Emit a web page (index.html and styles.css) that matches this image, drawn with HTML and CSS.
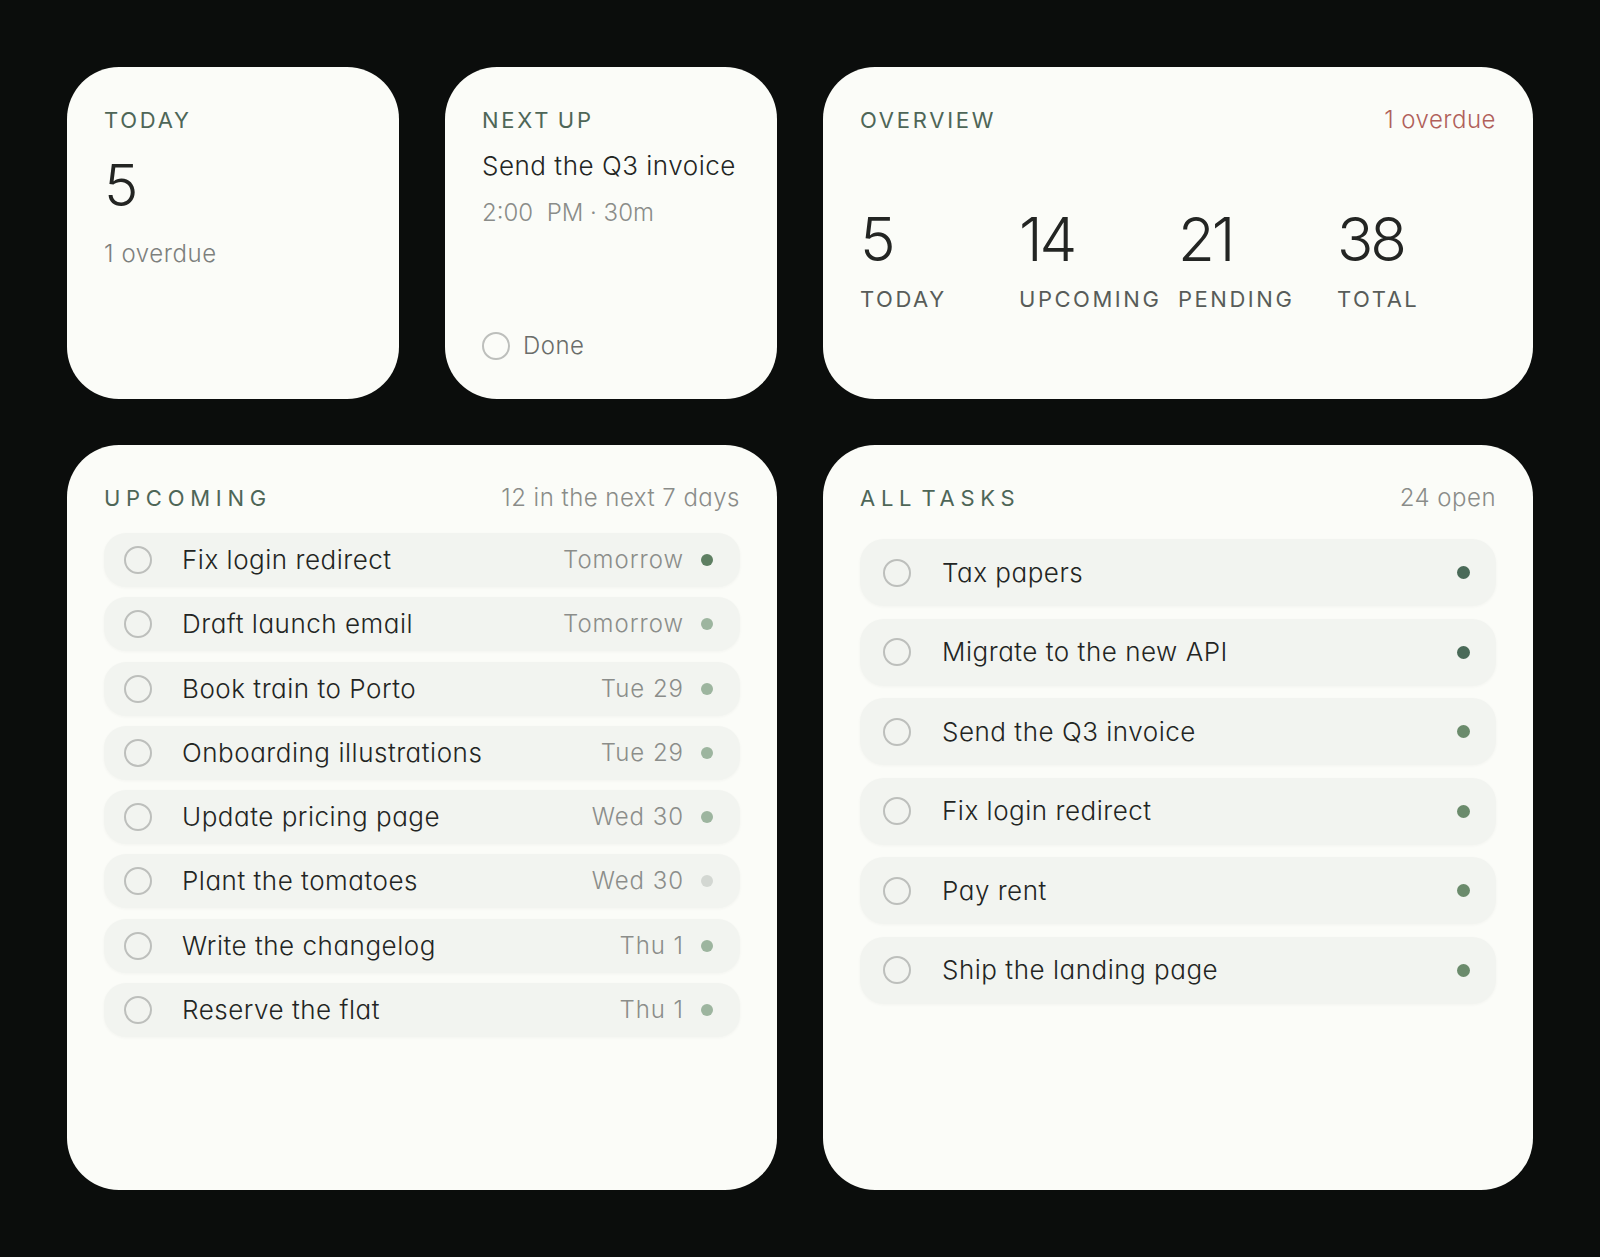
FILE: index.html
```html
<!DOCTYPE html>
<html lang="en">
<head>
<meta charset="utf-8">
<title>Tasks</title>
<link rel="stylesheet" href="styles.css">
</head>
<body>
<main class="board">
  <section class="card card-today">
    <div class="label">TODAY</div>
    <div class="big">5</div>
    <div class="sub">1 overdue</div>
  </section>

  <section class="card card-next">
    <div class="label">NEXT UP</div>
    <div class="next-title">Send the Q3 invoice</div>
    <div class="next-time">2:00&nbsp; PM · 30m</div>
    <div class="done"><span class="check"></span><span class="done-text">Done</span></div>
  </section>

  <section class="card card-overview">
    <div class="card-head">
      <div class="label">OVERVIEW</div>
      <div class="overdue">1 overdue</div>
    </div>
    <div class="stats">
      <div class="stat"><div class="big">5</div><div class="stat-label">TODAY</div></div>
      <div class="stat"><div class="big">14</div><div class="stat-label">UPCOMING</div></div>
      <div class="stat"><div class="big">21</div><div class="stat-label">PENDING</div></div>
      <div class="stat"><div class="big">38</div><div class="stat-label">TOTAL</div></div>
    </div>
  </section>

  <section class="card card-list card-upcoming">
    <div class="card-head">
      <div class="label section">UPCOMING</div>
      <div class="meta">12 in the next 7 days</div>
    </div>
    <ul class="rows rows-upcoming">
      <li class="row"><span class="check"></span><span class="row-text">Fix login redirect</span><span class="date">Tomorrow</span><span class="dot dot-strong"></span></li>
      <li class="row"><span class="check"></span><span class="row-text">Draft launch email</span><span class="date">Tomorrow</span><span class="dot dot-soft"></span></li>
      <li class="row"><span class="check"></span><span class="row-text">Book train to Porto</span><span class="date">Tue 29</span><span class="dot dot-soft"></span></li>
      <li class="row"><span class="check"></span><span class="row-text">Onboarding illustrations</span><span class="date">Tue 29</span><span class="dot dot-soft"></span></li>
      <li class="row"><span class="check"></span><span class="row-text">Update pricing page</span><span class="date">Wed 30</span><span class="dot dot-soft"></span></li>
      <li class="row"><span class="check"></span><span class="row-text">Plant the tomatoes</span><span class="date">Wed 30</span><span class="dot dot-grey"></span></li>
      <li class="row"><span class="check"></span><span class="row-text">Write the changelog</span><span class="date">Thu 1</span><span class="dot dot-soft"></span></li>
      <li class="row"><span class="check"></span><span class="row-text">Reserve the flat</span><span class="date">Thu 1</span><span class="dot dot-soft"></span></li>
    </ul>
  </section>

  <section class="card card-list card-all">
    <div class="card-head">
      <div class="label section">ALL TASKS</div>
      <div class="meta">24 open</div>
    </div>
    <ul class="rows rows-all">
      <li class="row"><span class="check"></span><span class="row-text">Tax papers</span><span class="dot dot-dark"></span></li>
      <li class="row"><span class="check"></span><span class="row-text">Migrate to the new API</span><span class="dot dot-dark"></span></li>
      <li class="row"><span class="check"></span><span class="row-text">Send the Q3 invoice</span><span class="dot dot-mid"></span></li>
      <li class="row"><span class="check"></span><span class="row-text">Fix login redirect</span><span class="dot dot-mid"></span></li>
      <li class="row"><span class="check"></span><span class="row-text">Pay rent</span><span class="dot dot-mid"></span></li>
      <li class="row"><span class="check"></span><span class="row-text">Ship the landing page</span><span class="dot dot-mid"></span></li>
    </ul>
  </section>
</main>
</body>
</html>
```

FILE: styles.css
```css
* { box-sizing: border-box; }

html, body {
  margin: 0;
  padding: 0;
  height: 100%;
}

body {
  background: #0b0d0c;
  font-family: "Inter", "Lato", "Noto Sans", sans-serif;
  font-weight: 300;
  font-feature-settings: "cv11" 1;
  color: #232523;
}

.board {
  display: grid;
  grid-template-columns: repeat(4, 1fr);
  grid-template-rows: 332px 1fr;
  gap: 46px;
  padding: 67px;
  height: 1257px;
}

.card {
  background: #fbfcf8;
  border-radius: 52px;
  padding: 42px 37px 37px;
  display: flex;
  flex-direction: column;
  min-width: 0;
}

.card-overview { grid-column: 3 / 5; }
.card-upcoming { grid-column: 1 / 3; }
.card-all { grid-column: 3 / 5; }

.label {
  font-size: 22px;
  line-height: 22px;
  font-weight: 400;
  letter-spacing: 0.125em;
  word-spacing: -0.1em;
  color: #4e6657;
}

.label.section {
  letter-spacing: 0.26em;
  word-spacing: -0.35em;
}

.big {
  font-size: 58px;
  line-height: 1;
  font-weight: 300;
  color: #232523;
  letter-spacing: -0.01em;
}

.card-today .big { margin-top: 25px; }

.sub {
  margin-top: 28px;
  font-size: 24px;
  line-height: 1;
  letter-spacing: 0.025em;
  color: #7d807d;
}

.next-title {
  margin-top: 22px;
  font-size: 26px;
  line-height: 1;
  letter-spacing: 0.02em;
  color: #232523;
}

.next-time {
  margin-top: 22px;
  font-size: 24px;
  line-height: 1;
  color: #8a8c89;
}

.done {
  margin-top: auto;
  margin-bottom: 2px;
  display: flex;
  align-items: center;
}

.done-text {
  font-size: 24px;
  line-height: 1;
  letter-spacing: 0.02em;
  color: #6a6d6a;
}

.check {
  flex: none;
  width: 28px;
  height: 28px;
  border-radius: 50%;
  border: 2.5px solid #bdbfbc;
  margin-right: 13px;
}

.card-head {
  display: flex;
  justify-content: space-between;
  align-items: center;
}

.overdue, .meta {
  font-size: 24px;
  line-height: 22px;
  letter-spacing: 0.02em;
}

.overdue { color: #b0605a; }
.meta { color: #8a8c89; }

.stats {
  margin-top: 78px;
  display: grid;
  grid-template-columns: repeat(4, 1fr);
}

.stats .big {
  font-size: 60px;
  letter-spacing: -0.05em;
}

.stat-label {
  margin-top: 19px;
  font-size: 22px;
  line-height: 1;
  font-weight: 400;
  letter-spacing: 0.115em;
  color: #585c59;
}

.rows {
  list-style: none;
  margin: 0;
  padding: 0;
  display: flex;
  flex-direction: column;
}

.row {
  display: flex;
  align-items: center;
  background: #f2f4f0;
  box-shadow: 0 1px 3px rgba(40, 50, 40, 0.04);
}

.row-text {
  flex: 1;
  min-width: 0;
  font-size: 26px;
  line-height: 1;
  letter-spacing: 0.02em;
  color: #232523;
  white-space: nowrap;
}

.rows-upcoming {
  margin-top: 24px;
  gap: 10.3px;
}

.rows-upcoming .row {
  height: 54px;
  border-radius: 22px;
  padding: 0 27px 0 20px;
}

.rows-upcoming .check { margin-right: 30px; }

.rows-all {
  margin-top: 30px;
  gap: 12.5px;
}

.rows-all .row {
  height: 67px;
  border-radius: 24px;
  padding: 0 26px 0 23px;
}

.rows-all .check { margin-right: 31px; }

.date {
  font-size: 24px;
  line-height: 1;
  letter-spacing: 0.04em;
  color: #8b8d8a;
  margin-right: 17px;
}

.dot {
  flex: none;
  width: 12px;
  height: 12px;
  border-radius: 50%;
}

.rows-all .dot { width: 13px; height: 13px; }

.dot-strong { background: #5e7f62; }
.dot-soft { background: #9db59f; }
.dot-grey { background: #d3d7d2; }
.dot-dark { background: #4a6a58; }
.dot-mid { background: #6b8b6c; }
```
